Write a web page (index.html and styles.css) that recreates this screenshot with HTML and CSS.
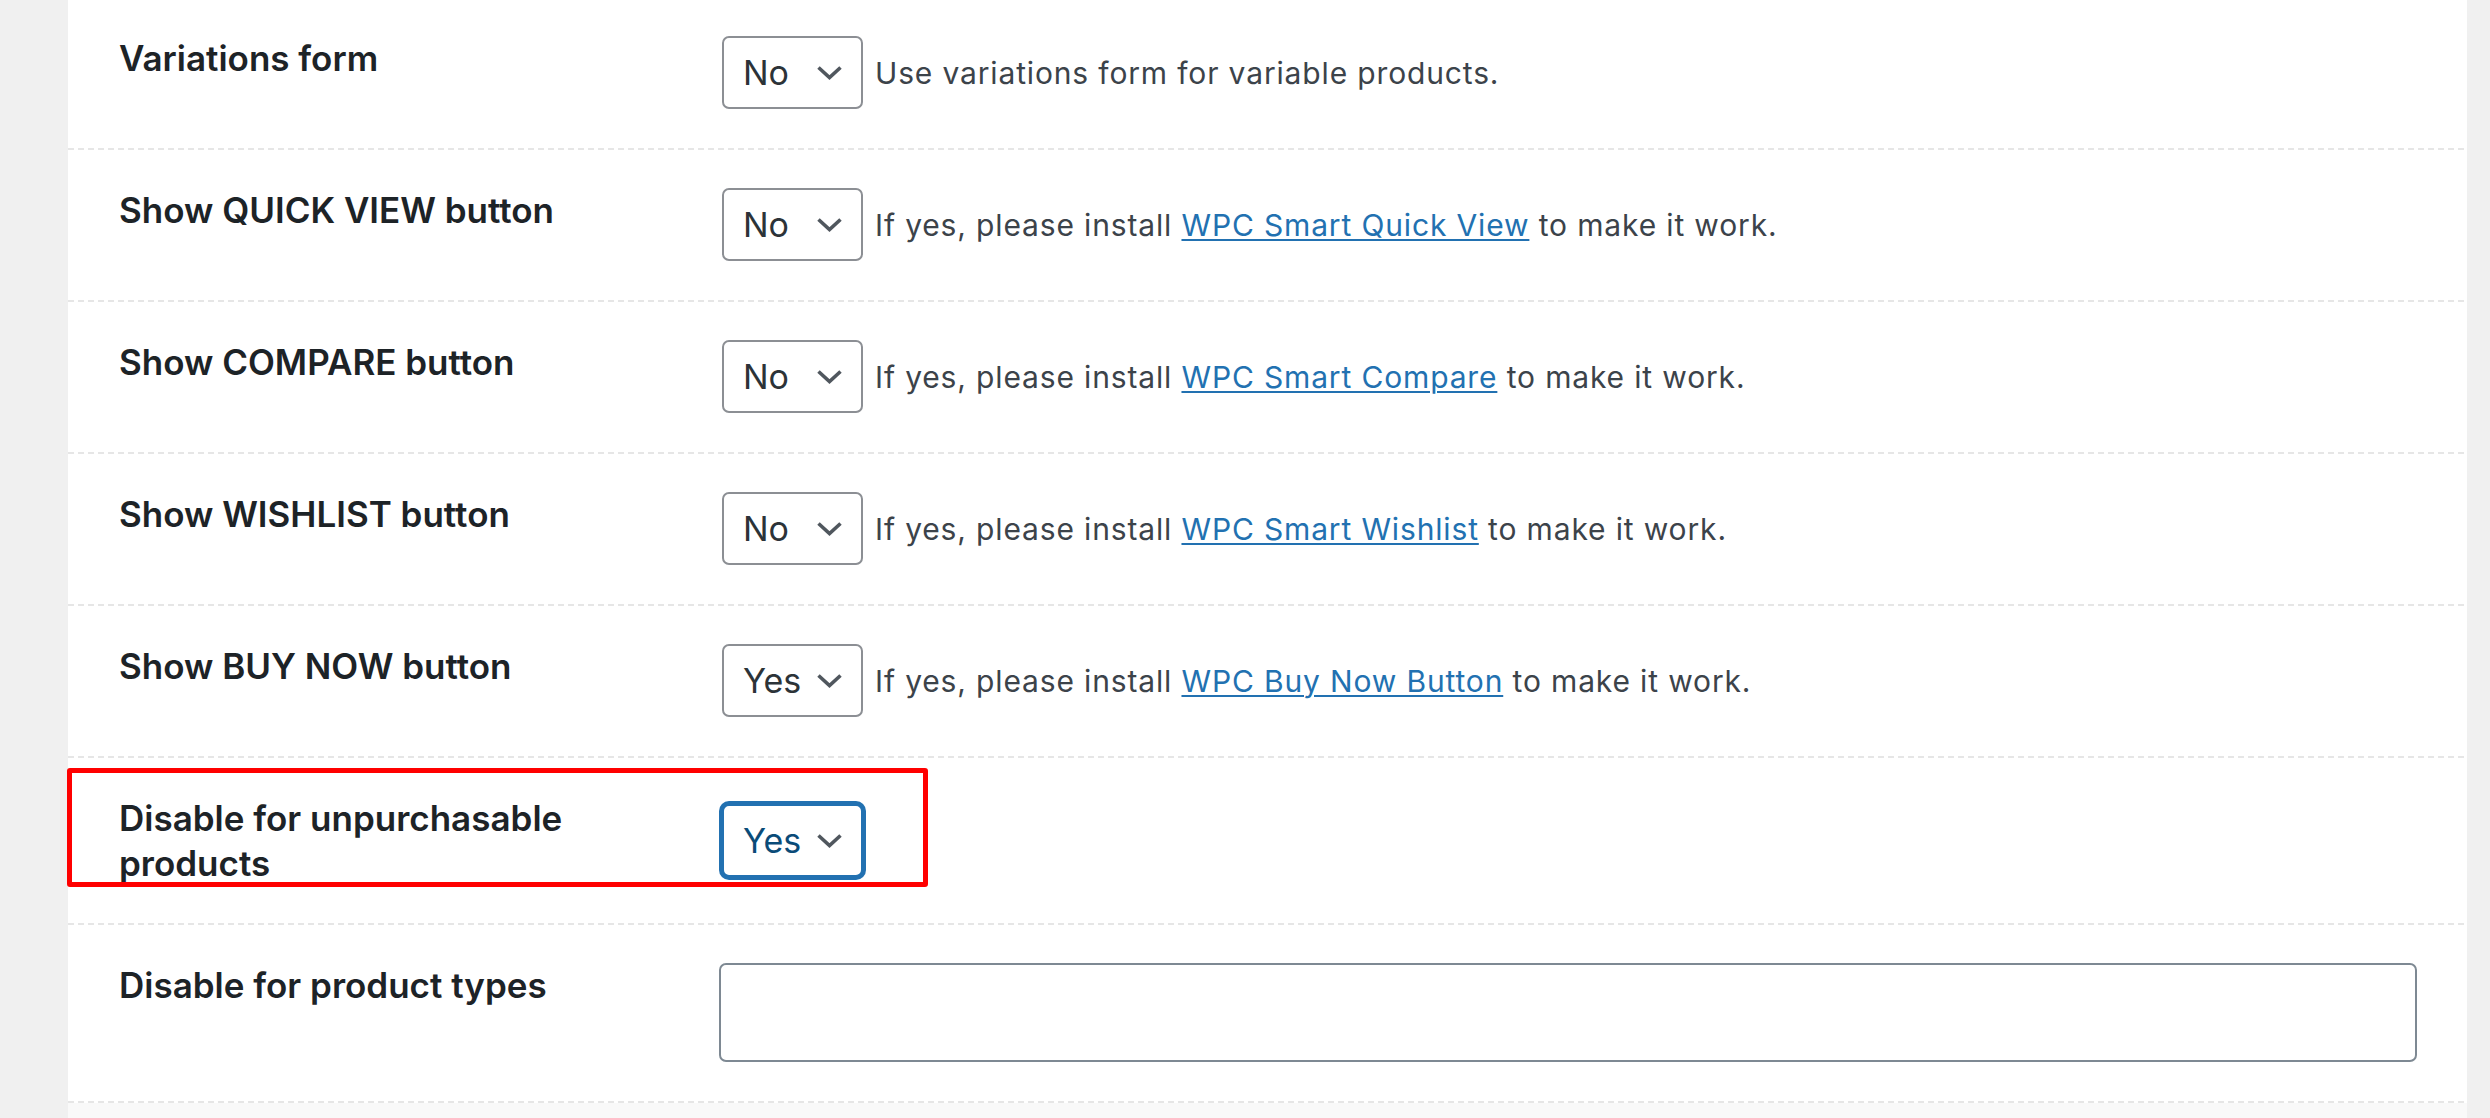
FILE: index.html
```html
<!DOCTYPE html>
<html lang="en">
<head>
<meta charset="utf-8">
<title>Settings</title>
<link rel="stylesheet" href="styles.css">
</head>
<body>
<div class="panel">
  <div class="row">
    <div class="label">Variations form</div>
    <div class="field">
      <span class="select"><span class="value">No</span><svg class="chev" viewBox="0 0 27 15"><polyline points="2.5,2.5 13.5,12.5 24.5,2.5"/></svg></span>
      <span class="desc">Use variations form for variable products.</span>
    </div>
  </div>
  <div class="row">
    <div class="label">Show QUICK VIEW button</div>
    <div class="field">
      <span class="select"><span class="value">No</span><svg class="chev" viewBox="0 0 27 15"><polyline points="2.5,2.5 13.5,12.5 24.5,2.5"/></svg></span>
      <span class="desc">If yes, please install <a href="#">WPC Smart Quick View</a> to make it work.</span>
    </div>
  </div>
  <div class="row">
    <div class="label">Show COMPARE button</div>
    <div class="field">
      <span class="select"><span class="value">No</span><svg class="chev" viewBox="0 0 27 15"><polyline points="2.5,2.5 13.5,12.5 24.5,2.5"/></svg></span>
      <span class="desc">If yes, please install <a href="#">WPC Smart Compare</a> to make it work.</span>
    </div>
  </div>
  <div class="row">
    <div class="label">Show WISHLIST button</div>
    <div class="field">
      <span class="select"><span class="value">No</span><svg class="chev" viewBox="0 0 27 15"><polyline points="2.5,2.5 13.5,12.5 24.5,2.5"/></svg></span>
      <span class="desc">If yes, please install <a href="#">WPC Smart Wishlist</a> to make it work.</span>
    </div>
  </div>
  <div class="row">
    <div class="label">Show BUY NOW button</div>
    <div class="field">
      <span class="select"><span class="value">Yes</span><svg class="chev" viewBox="0 0 27 15"><polyline points="2.5,2.5 13.5,12.5 24.5,2.5"/></svg></span>
      <span class="desc">If yes, please install <a href="#">WPC Buy Now Button</a> to make it work.</span>
    </div>
  </div>
  <div class="row row-marked">
    <div class="label">Disable for unpurchasable products</div>
    <div class="field">
      <span class="select is-focus"><span class="value">Yes</span><svg class="chev" viewBox="0 0 27 15"><polyline points="2.5,2.5 13.5,12.5 24.5,2.5"/></svg></span>
    </div>
    <div class="marker"></div>
  </div>
  <div class="row">
    <div class="label">Disable for product types</div>
    <div class="field">
      <div class="textarea"></div>
    </div>
  </div>
  <div class="footer"></div>
</div>
</body>
</html>
```

FILE: styles.css
```css
html, body {
  margin: 0;
  padding: 0;
}

body {
  background: #f0f0f0;
  font-family: Inter, "Noto Sans", "Liberation Sans", sans-serif;
  color: #3c434a;
  overflow: hidden;
}

.panel {
  margin: -2px 23px 0 68px;
  background: #fff;
}

.row {
  position: relative;
  display: grid;
  grid-template-columns: 651px 1fr;
  padding-bottom: 2px;
}

.row::after {
  content: "";
  position: absolute;
  left: 0;
  right: 0;
  bottom: 0;
  height: 2px;
  background: repeating-linear-gradient(90deg, #e6e6e6 0 6px, transparent 6px 10px);
}

.label {
  padding: 38px 60px 37px 51px;
  font-size: 35px;
  line-height: 45px;
  font-weight: 600;
  color: #1d2327;
}

.field {
  display: flex;
  align-items: center;
  padding: 38px 50px 39px 0;
}

.select {
  flex: none;
  box-sizing: border-box;
  width: 141px;
  height: 73px;
  margin-left: 3px;
  padding: 0 18px 0 19px;
  display: flex;
  align-items: center;
  justify-content: space-between;
  border: 2px solid #8c8f94;
  border-radius: 7px;
  background: #fff;
  font-size: 34px;
  color: #2c3338;
}

.select.is-focus {
  border-color: #2271b1;
  box-shadow: 0 0 0 3px #2271b1;
  color: #0a4b78;
}

.chev {
  width: 27px;
  height: 15px;
  fill: none;
  stroke: #50575e;
  stroke-width: 3.6;
}

.desc {
  margin-left: 12px;
  font-size: 30px;
  letter-spacing: 0.85px;
  color: #3c434a;
  white-space: nowrap;
}

.desc a {
  color: #2271b1;
  text-decoration: underline;
  text-decoration-thickness: 2px;
  text-underline-offset: 3px;
}

.textarea {
  flex: 1;
  box-sizing: border-box;
  height: 99px;
  border: 2px solid #7e8993;
  border-radius: 7px;
  background: #fff;
}

.marker {
  position: absolute;
  left: -1px;
  top: 10px;
  width: 861px;
  height: 119px;
  box-sizing: border-box;
  border: 5px solid #ff0000;
  border-radius: 3px;
  pointer-events: none;
  z-index: 2;
}

.footer {
  height: 40px;
  background: #f9f9f9;
}
```
